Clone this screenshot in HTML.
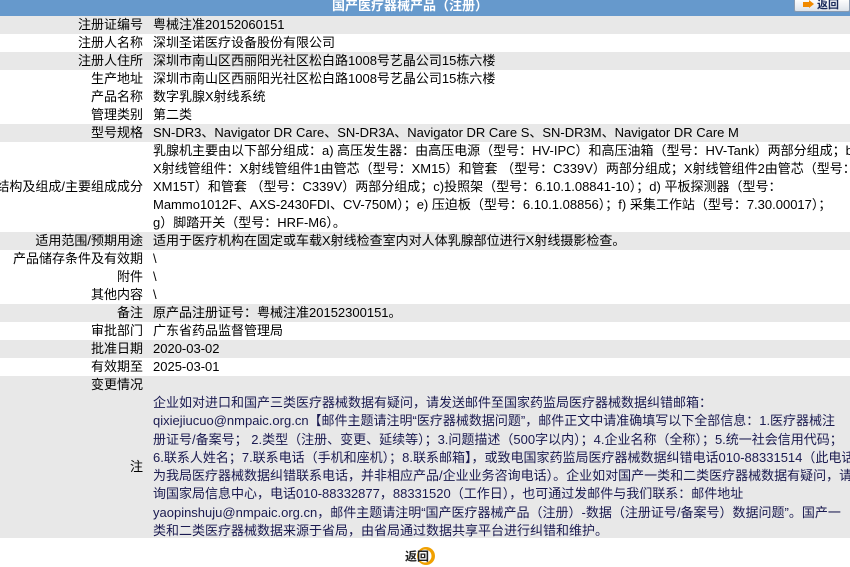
<!DOCTYPE html>
<html><head><meta charset="utf-8"><style>
*{margin:0;padding:0;box-sizing:border-box}
body{width:850px;height:567px;overflow:hidden;background:#fff;font-family:"Liberation Sans","Noto Sans CJK SC",sans-serif;font-size:13px;color:#000;position:relative}
.hd{position:absolute;left:0;top:0;width:850px;height:16px;background:#6699cc;color:#fff;font-weight:bold;font-size:13px;line-height:12px;text-align:center;padding-right:30px;overflow:hidden}
.btn{position:absolute;left:794px;top:-2px;width:56px;height:14px;background:linear-gradient(#fff,#dde3ea);border:1px solid #8a9bb0;border-radius:2px;font-size:11px;font-weight:bold;color:#1a2a5a;line-height:12px;padding-left:22px}
.btn:before{content:"";position:absolute;left:8px;top:3px;width:6px;height:5px;background:#f08a00}
.btn:after{content:"";position:absolute;left:14px;top:1px;border-left:5px solid #f08a00;border-top:4.5px solid transparent;border-bottom:4.5px solid transparent}
.r{position:absolute;left:0;width:850px;height:18px;line-height:18px}
.g{background:#e8e8e8}
.l{position:absolute;right:707px;white-space:nowrap}
.v{position:absolute;left:153px;white-space:nowrap}
.ml{line-height:18px}
.note{position:absolute;left:153px;top:394px;line-height:18.3px;color:#1a1a50;font-size:13px;white-space:nowrap}
.back{position:absolute;left:404px;top:546px;width:34px;height:20px}
</style></head><body>
<div class="hd">国产医疗器械产品（注册）</div>
<div class="btn">返回</div>
<div class="r g" style="top:16px"><span class="l">注册证编号</span><span class="v">粤械注准20152060151</span></div>
<div class="r" style="top:34px"><span class="l">注册人名称</span><span class="v">深圳圣诺医疗设备股份有限公司</span></div>
<div class="r g" style="top:52px"><span class="l">注册人住所</span><span class="v">深圳市南山区西丽阳光社区松白路1008号艺晶公司15栋六楼</span></div>
<div class="r" style="top:70px"><span class="l">生产地址</span><span class="v">深圳市南山区西丽阳光社区松白路1008号艺晶公司15栋六楼</span></div>
<div class="r" style="top:88px"><span class="l">产品名称</span><span class="v">数字乳腺X射线系统</span></div>
<div class="r" style="top:106px"><span class="l">管理类别</span><span class="v">第二类</span></div>
<div class="r g" style="top:124px"><span class="l">型号规格</span><span class="v">SN-DR3、Navigator DR Care、SN-DR3A、Navigator DR Care S、SN-DR3M、Navigator DR Care M</span></div>
<div class="r" style="top:142px;height:90px"><span class="l" style="top:36px">结构及组成/主要组成成分</span><div class="v ml" style="top:0">乳腺机主要由以下部分组成：a) 高压发生器：由高压电源（型号：HV-IPC）和高压油箱（型号：HV-Tank）两部分组成；b)<br>X射线管组件：X射线管组件1由管芯（型号：XM15）和管套 （型号：C339V）两部分组成；X射线管组件2由管芯（型号：<br>XM15T）和管套 （型号：C339V）两部分组成；c)投照架（型号：6.10.1.08841-10）；d) 平板探测器（型号：<br>Mammo1012F、AXS-2430FDI、CV-750M）；e) 压迫板（型号：6.10.1.08856）；f) 采集工作站（型号：7.30.00017）；<br>g）脚踏开关（型号：HRF-M6）。</div></div>
<div class="r g" style="top:232px"><span class="l">适用范围/预期用途</span><span class="v">适用于医疗机构在固定或车载X射线检查室内对人体乳腺部位进行X射线摄影检查。</span></div>
<div class="r" style="top:250px"><span class="l">产品储存条件及有效期</span><span class="v">\</span></div>
<div class="r" style="top:268px"><span class="l">附件</span><span class="v">\</span></div>
<div class="r" style="top:286px"><span class="l">其他内容</span><span class="v">\</span></div>
<div class="r g" style="top:304px"><span class="l">备注</span><span class="v">原产品注册证号：粤械注准20152300151。</span></div>
<div class="r" style="top:322px"><span class="l">审批部门</span><span class="v">广东省药品监督管理局</span></div>
<div class="r g" style="top:340px"><span class="l">批准日期</span><span class="v">2020-03-02</span></div>
<div class="r" style="top:358px"><span class="l">有效期至</span><span class="v">2025-03-01</span></div>
<div class="r g" style="top:376px;height:162px"><span class="l" style="top:0">变更情况</span><span class="l" style="top:82px">注</span></div>
<div class="note">企业如对进口和国产三类医疗器械数据有疑问，请发送邮件至国家药监局医疗器械数据纠错邮箱：<br>qixiejiucuo@nmpaic.org.cn【邮件主题请注明“医疗器械数据问题”，邮件正文中请准确填写以下全部信息：1.医疗器械注<br>册证号/备案号； 2.类型（注册、变更、延续等）；3.问题描述（500字以内）；4.企业名称（全称）；5.统一社会信用代码；<br>6.联系人姓名；7.联系电话（手机和座机）；8.联系邮箱】，或致电国家药监局医疗器械数据纠错电话010-88331514（此电话<br>为我局医疗器械数据纠错联系电话，并非相应产品/企业业务咨询电话）。企业如对国产一类和二类医疗器械数据有疑问，请咨<br>询国家局信息中心，电话010-88332877，88331520（工作日），也可通过发邮件与我们联系：邮件地址<br>yaopinshuju@nmpaic.org.cn，邮件主题请注明“国产医疗器械产品（注册）-数据（注册证号/备案号）数据问题”。国产一<br>类和二类医疗器械数据来源于省局，由省局通过数据共享平台进行纠错和维护。</div>
<svg class="back" viewBox="0 0 34 20"><circle cx="22" cy="10" r="9" fill="#f0a000"/><circle cx="21" cy="10" r="6.5" fill="#fff"/><text x="1" y="14.5" font-size="12" font-weight="bold" font-family="Liberation Sans,Noto Sans CJK SC,sans-serif" fill="#222">返回</text></svg>
</body></html>
